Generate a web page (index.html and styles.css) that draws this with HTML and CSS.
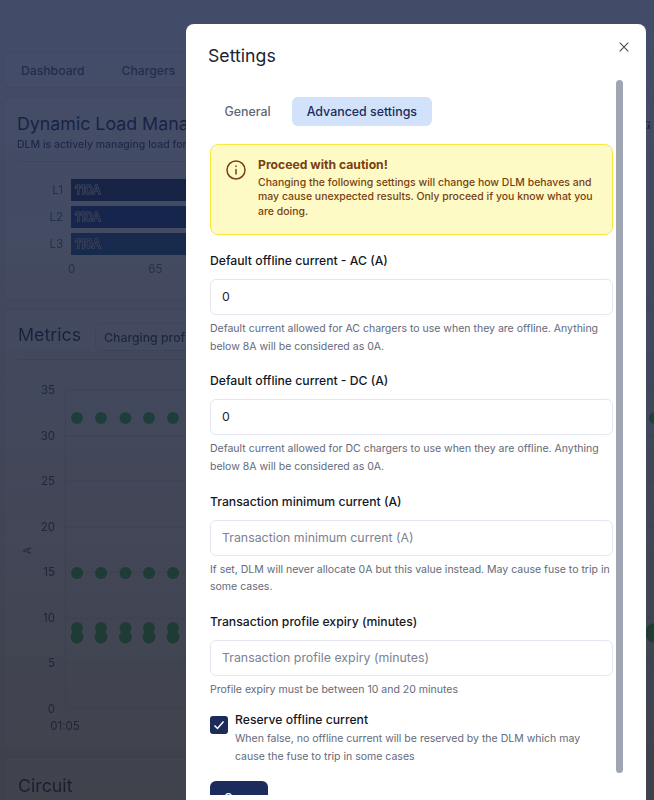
FILE: index.html
```html
<!DOCTYPE html>
<html lang="en">
<head>
<meta charset="utf-8">
<title>Settings</title>
<link rel="stylesheet" href="styles.css">
</head>
<body>
<div class="page">
  <nav class="card nav">
    <span class="nav-item">Dashboard</span>
    <span class="nav-item">Chargers</span>
    <span class="nav-item nav-end">Transactions</span>
  </nav>
  <section class="card dlm">
    <div class="title-row">
      <h2 class="card-title">Dynamic Load Management</h2>
      <span class="title-end">Status</span>
    </div>
    <p class="card-sub">DLM is actively managing load for this circuit</p>
    <div class="rule"></div>
    <div class="bars">
      <div class="bar-row"><span class="bar-label">L1</span><div class="bar bar-1">110A</div></div>
      <div class="bar-row"><span class="bar-label">L2</span><div class="bar bar-2">110A</div></div>
      <div class="bar-row"><span class="bar-label">L3</span><div class="bar bar-3">110A</div></div>
      <div class="bar-axis"><span>0</span><span>65</span></div>
    </div>
  </section>
  <section class="card metrics">
    <div class="metrics-head">
      <h2 class="card-title">Metrics</h2>
      <div class="select">Charging profile</div>
    </div>
    <div class="rule"></div>
    <svg class="chart" width="654" height="390" viewBox="0 0 654 390">
      <g class="grid">
        <line x1="60" x2="654" y1="7" y2="7"/><line x1="60" x2="654" y1="53" y2="53"/>
        <line x1="60" x2="654" y1="98" y2="98"/><line x1="60" x2="654" y1="144" y2="144"/>
        <line x1="60" x2="654" y1="189" y2="189"/><line x1="60" x2="654" y1="235" y2="235"/>
        <line x1="60" x2="654" y1="280" y2="280"/><line x1="60" x2="654" y1="325" y2="325"/>
        <line x1="64.5" x2="64.5" y1="7" y2="325"/>
      </g>
      <g class="axis-text">
        <text x="54" y="11">35</text><text x="54" y="57">30</text><text x="54" y="102">25</text>
        <text x="54" y="148">20</text><text x="54" y="193">15</text><text x="54" y="239">10</text>
        <text x="54" y="284">5</text><text x="54" y="330">0</text>
      </g>
      <text class="axis-x" x="64" y="347">01:05</text>
      <text class="axis-a" x="0" y="0" transform="translate(30 171) rotate(-90)">A</text>
      <g class="dots">
        <circle cx="76" cy="35" r="6"/><circle cx="100" cy="35" r="6"/><circle cx="124.500" cy="35" r="6"/><circle cx="148" cy="35" r="6"/><circle cx="172" cy="35" r="6"/>
        <circle cx="76" cy="190" r="6"/><circle cx="100" cy="190" r="6"/><circle cx="124.500" cy="190" r="6"/><circle cx="148" cy="190" r="6"/><circle cx="172" cy="190" r="6"/>
        <circle cx="76" cy="245" r="6"/><circle cx="100" cy="245" r="6"/><circle cx="124.500" cy="245" r="6"/><circle cx="148" cy="245" r="6"/><circle cx="172" cy="245" r="6"/>
        <circle cx="76" cy="254" r="6.500"/><circle cx="100" cy="254" r="6.500"/><circle cx="124.500" cy="254" r="6.500"/><circle cx="148" cy="254" r="6.500"/><circle cx="172" cy="254" r="6.500"/>
        <circle cx="654" cy="35" r="6"/><circle cx="654" cy="250" r="10"/>
      </g>
    </svg>
  </section>
  <section class="card circuit">
    <h2 class="card-title">Circuit</h2>
  </section>
</div>
<div class="overlay"></div>
<div class="modal" role="dialog" aria-label="Settings">
  <h1 class="modal-title">Settings</h1>
  <button class="close" aria-label="Close">
    <svg width="10" height="10" viewBox="0 0 10 10"><path d="M.7.7l8.600 8.600M9.300.7L.7 9.300"/></svg>
  </button>
  <div class="scrollbar"></div>
  <div class="modal-body">
    <div class="tabs">
      <span class="tab">General</span>
      <span class="tab tab-active">Advanced settings</span>
    </div>
    <div class="alert">
      <svg class="alert-icon" width="20" height="20" viewBox="0 0 20 20"><circle cx="10" cy="10" r="9"/><path d="M10 9.500v4.500M10 6v.6"/></svg>
      <div>
        <div class="alert-title">Proceed with caution!</div>
        <div class="alert-text">Changing the following settings will change how DLM behaves and may cause unexpected results. Only proceed if you know what you are doing.</div>
      </div>
    </div>
    <div class="field">
      <label class="label">Default offline current - AC (A)</label>
      <div class="input">0</div>
      <p class="help">Default current allowed for AC chargers to use when they are offline. Anything below 8A will be considered as 0A.</p>
    </div>
    <div class="field">
      <label class="label">Default offline current - DC (A)</label>
      <div class="input">0</div>
      <p class="help">Default current allowed for DC chargers to use when they are offline. Anything below 8A will be considered as 0A.</p>
    </div>
    <div class="field">
      <label class="label">Transaction minimum current (A)</label>
      <div class="input input-empty">Transaction minimum current (A)</div>
      <p class="help">If set, DLM will never allocate 0A but this value instead. May cause fuse to trip in some cases.</p>
    </div>
    <div class="field">
      <label class="label">Transaction profile expiry (minutes)</label>
      <div class="input input-empty">Transaction profile expiry (minutes)</div>
      <p class="help">Profile expiry must be between 10 and 20 minutes</p>
    </div>
    <div class="check-row">
      <span class="checkbox"><svg width="12" height="12" viewBox="0 0 12 12"><path d="M1.500 6.500l3 3 6-7"/></svg></span>
      <div>
        <div class="check-label">Reserve offline current</div>
        <p class="help check-help">When false, no offline current will be reserved by the DLM which may cause the fuse to trip in some cases</p>
      </div>
    </div>
    <button class="save">Save</button>
  </div>
</div>
</body>
</html>
```
FILE: styles.css
```css
* { box-sizing: border-box; }
html, body { margin: 0; height: 800px; overflow: hidden; }
body { font-family: "Inter", "Liberation Sans", sans-serif; background: #fff; color: #1a2b52; }
.page { height: 800px; padding: 52px 3px 0; display: flex; flex-direction: column; gap: 9px; background: #f4f5f9; filter: blur(.6px); }
.card { background: #fff; border: 1px solid #e6e8ef; border-radius: 8px; flex: none; }
.nav { height: 36px; padding: 0 17px; display: flex; align-items: center; gap: 37px; font-size: 12.200px; font-weight: 500; color: #56607a; overflow: hidden; }
.nav-end { margin-left: 470px; flex: none; }
.dlm { height: 203px; padding: 14px 13px; }
.metrics { height: 439px; padding: 13px 14px; position: relative; }
.circuit { height: 60px; padding: 16px 14px; }
.title-row { display: flex; justify-content: space-between; overflow: hidden; margin-right: -13px; }
.title-end { flex: none; margin-right: -24px; font-size: 13px; line-height: 24px; font-weight: 500; color: #0e1a3a; }
.card-title { margin: 0; font-size: 17.800px; line-height: 24px; font-weight: 400; white-space: nowrap; color: #1a2b52; }
.card-sub { margin: 2px 0 0; font-size: 10.500px; line-height: 14px; white-space: nowrap; color: #3f4a68; font-weight: 500; }
.rule { height: 1px; background: #dfe2ea; margin-top: 9px; }
.bars { padding-top: 14px; }
.bar-row { display: flex; align-items: center; gap: 8px; height: 27px; }
.bar-label { width: 46px; text-align: right; font-size: 11.500px; color: #66708a; }
.bar { flex: 1; height: 22px; padding-left: 4px; line-height: 22px; font-size: 12px; color: #3a4050; -webkit-text-stroke: 1.500px #d8d8de; paint-order: stroke fill; }
.bar-1 { background: #16305f; }
.bar-2 { background: #183a8a; }
.bar-3 { background: #1a5590; }
.bar-axis { display: flex; gap: 73px; margin: 5px 0 0 51px; font-size: 11.500px; color: #66708a; }
.metrics-head { display: flex; align-items: center; gap: 14px; height: 28px; }
.metrics .card-title { margin-top: -4px; }
.select { height: 28px; width: 300px; padding: 0 8px; line-height: 27px; border: 1px solid #dfe2ea; border-radius: 6px; font-size: 12.300px; font-weight: 500; color: #35415f; }
.metrics .rule { margin-top: 8px; }
.chart { position: absolute; left: -3px; top: 73px; }
.grid line { stroke: #dfe2ea; stroke-width: 1; }
.axis-text text { font-size: 11.500px; text-anchor: end; fill: #3f4a66; font-family: "Inter", sans-serif; }
.axis-x { font-size: 11.500px; text-anchor: middle; fill: #3f4a66; }
.axis-a { font-size: 10px; fill: #3f4a66; }
.dots circle { fill: #38c850; }
.overlay { position: fixed; inset: 0; background: linear-gradient(180deg, rgba(22,34,70,.8) 0%, rgba(26,28,40,.83) 100%); }
.modal { position: fixed; left: 186px; top: 24px; width: 460px; height: 776px; padding: 0; background: #fff; border-radius: 8px 8px 0 0; overflow: hidden; }
.modal-title { margin: 0; padding: 19px 22px 0; font-size: 17.700px; line-height: 26px; font-weight: 400; color: #1c2333; }
.close { position: absolute; right: 17px; top: 18px; width: 10px; height: 10px; padding: 0; border: 0; background: none; display: flex; }
.close path { stroke: #4a5265; stroke-width: 1.200; fill: none; }
.scrollbar { position: absolute; left: 430px; top: 56px; width: 7px; height: 693px; border-radius: 4px; background: #9fa5b3; }
.modal-body { width: 403px; height: 726px; margin-left: 24px; padding-top: 28px; overflow: hidden; }
.tabs { display: flex; gap: 7px; height: 29px; align-items: stretch; }
.tab { padding: 0 14.500px; line-height: 29px; font-size: 12.400px; font-weight: 500; color: #5f6678; border-radius: 6px; }
.tab-active { background: #d2e2fb; color: #1c2b58; }
.alert { margin-top: 18px; display: flex; gap: 12px; padding: 11px 15px; height: 90.750px; background: #fefac5; border: 1px solid #fbe83e; border-radius: 8px; }
.alert-icon { flex: none; margin-top: 4px; }
.alert-icon circle, .alert-icon path { fill: none; stroke: #7a3f10; stroke-width: 1.500; stroke-linecap: round; }
.alert-title { font-size: 12.200px; line-height: 17px; margin-bottom: 2.500px; font-weight: 700; color: #7a3f10; }
.alert-text { font-size: 10.480px; line-height: 14.500px; font-weight: 500; color: #7a3f10; }
.field { margin-top: 17.350px; }
.label { display: block; font-size: 12.200px; line-height: 18px; font-weight: 500; color: #14171f; }
.input { margin-top: 9px; height: 36px; padding: 0 11px; line-height: 34px; border: 1px solid #e4e6f2; border-radius: 6px; font-size: 12.350px; color: #1c2333; }
.input-empty { color: #7b8290; }
.help { margin: 5px 0 0; font-size: 10.530px; line-height: 17.500px; color: #646a7a; }
.check-row { display: flex; gap: 7px; margin-top: 12px; }
.checkbox { flex: none; width: 18px; height: 18px; margin-top: 5px; background: #1a2b5c; border-radius: 3px; display: flex; align-items: center; justify-content: center; }
.checkbox path { fill: none; stroke: #fff; stroke-width: 1.500; }
.check-label { font-size: 12.200px; line-height: 18px; font-weight: 500; color: #14171f; }
.check-help { margin-top: 1px; line-height: 18px; max-width: 355px; }
.save { display: block; margin-top: 15px; width: 58px; height: 36px; border: 0; border-radius: 6px; background: #1a2b5c; color: #fff; font: 500 12.500px "Inter", sans-serif; }
```
